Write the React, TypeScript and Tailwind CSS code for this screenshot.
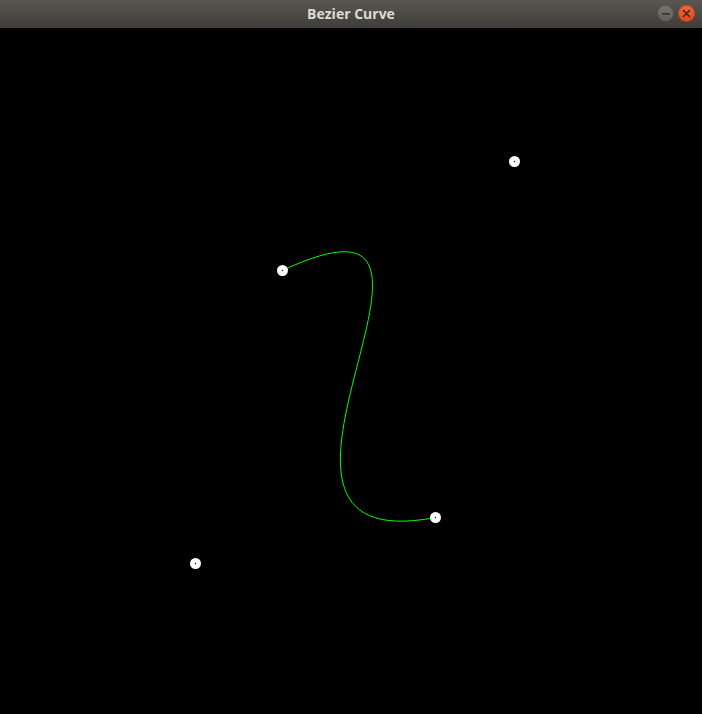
import React from "react";

export default function App() {
  const pts: [number, number][] = [
    [282.5, 270.5],
    [514.5, 161.5],
    [195.5, 563.5],
    [435.5, 517.5],
  ];
  const off = 28;
  const p = pts.map(([x, y]) => [x, y - off]);
  const d = `M ${p[0][0]} ${p[0][1]} C ${p[1][0]} ${p[1][1]}, ${p[2][0]} ${p[2][1]}, ${p[3][0]} ${p[3][1]}`;
  return (
    <div className="w-[702px] h-[714px] flex flex-col bg-black overflow-hidden">
      <div className="relative h-[28px] shrink-0 flex items-center justify-center bg-gradient-to-b from-[#5a5751] to-[#3e3d39]">
        <span
          className="text-[14px] font-bold text-[#dfdbd2] leading-none"
          style={{ fontFamily: '"Open Sans", "DejaVu Sans", sans-serif' }}
        >
          Bezier Curve
        </span>
        <div className="absolute right-[7px] top-[5px] flex items-center gap-[4px]">
          <div className="w-[17px] h-[17px] rounded-full bg-gradient-to-b from-[#77766f] to-[#5f5e59] flex items-center justify-center shadow-[inset_0_0_0_1px_rgba(0,0,0,0.25)]">
            <div className="w-[8px] h-[2px] bg-[#3c3b37] rounded-sm" />
          </div>
          <div className="w-[17px] h-[17px] rounded-full bg-gradient-to-b from-[#f0643a] to-[#e04a1c] flex items-center justify-center shadow-[inset_0_0_0_1px_rgba(0,0,0,0.2)]">
            <svg width="9" height="9" viewBox="0 0 9 9">
              <path d="M1.5 1.5 L7.5 7.5 M7.5 1.5 L1.5 7.5" stroke="#3c2a22" strokeWidth="1.6" strokeLinecap="round" />
            </svg>
          </div>
        </div>
      </div>
      <div className="relative flex-1 bg-black">
        <svg width="702" height="686" className="block">
          <path d={d} fill="none" stroke="#00ff00" strokeWidth="1" />
          {p.map(([x, y], i) => (
            <g key={i}>
              <circle cx={x} cy={y} r="5.5" fill="#ffffff" />
              <circle cx={x} cy={y} r="0.7" fill="#000000" />
            </g>
          ))}
        </svg>
      </div>
    </div>
  );
}
